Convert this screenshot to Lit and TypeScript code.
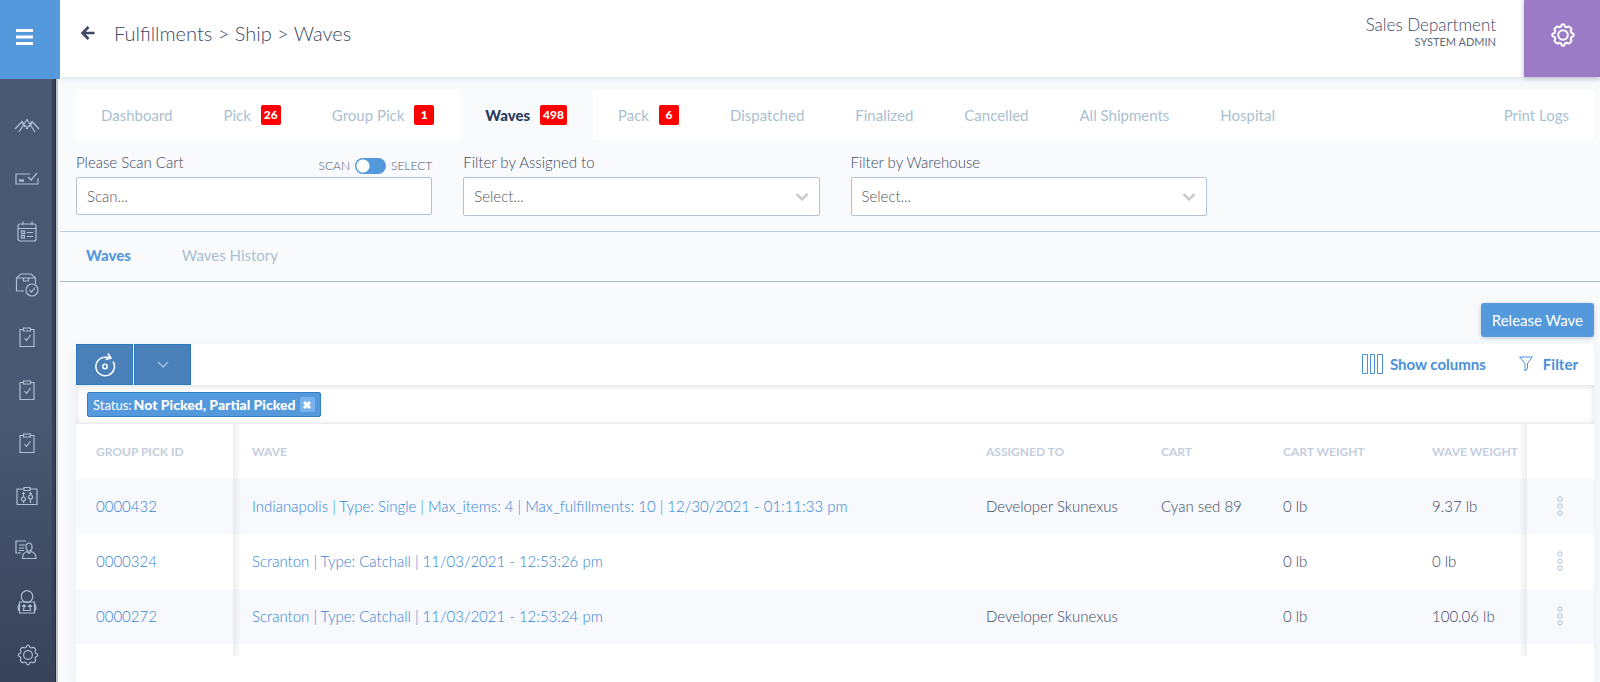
import { LitElement, html, css, svg } from "lit";
import { customElement } from "lit/decorators.js";

const icons = {
  peaks: svg`<path d="M1 17 8 9.500l6 7.500M5 20l8-12.500 8 12.500M12 17l6-7.500 7 7.500M8 11l3 4M18 11l-3 4"/>`,
  card: svg`<path d="M16 9H2v10h22v-6"/><path d="M5 15.500h5" stroke-width="2.400"/><path d="m14 12 3 3 6-7"/>`,
  calendar: svg`<rect x="4" y="6" width="18" height="17" rx="2"/><path d="M4 10.500h18M9 3.500V7M18 3.500V7"/><rect x="7.500" y="13" width="3" height="2.500"/><rect x="7.500" y="17.500" width="3" height="2.500"/><path d="M13 14.500h6M13 18.500h6"/>`,
  box: svg`<path d="M10 20H2.500V7L7 3h10l4.500 4v6M2.500 7h19M9.500 7.500v2.500h5V7.500"/><circle cx="18" cy="19" r="6"/><path d="m15.500 19 2 2 3.500-4.500"/>`,
  clip: svg`<path d="M9 5.500H6v17h14v-17h-3M9.500 4h7v3h-7zM10.500 14l2 2.500 4-5.500"/>`,
  sliders: svg`<path d="M10 6H3v15.500h20V6h-7M10 4.500h6v3h-6zM9.500 9v5M9.500 18v2M16.500 9v3M16.500 16v4"/><circle cx="9.500" cy="16" r="2"/><circle cx="16.500" cy="14" r="2"/><path d="M8 10.500h3M15 10.500h3"/>`,
  person: svg`<path d="M7 17H2V5h10M5 9h6M5 12h5M5 14.500h5"/><ellipse cx="15" cy="11" rx="3" ry="4"/><path d="M8.500 22.500c0-5 2.500-6.500 4.500-7l2 2 2-2c2 .5 5 2 5 7z"/>`,
  robot: svg`<circle cx="13" cy="7.500" r="5.800"/><path d="M5.500 13h15v11h-15zM5.500 15c-2 1-2 6 0 7M20.500 15c2 1 2 6 0 7M8 17.500l2-1.500 2 1.500M10 16.500v3M14 17.500l2-1.500 2 1.500M16 16.500v3M9.500 19.500v2h7v-2"/>`,
};

const gearShape = svg`<circle cx="12" cy="12" r="4.800"/><path d="M12 1.300c1.300 0 1.700.7 1.900 2.200l2 .8c1.200-.9 2-1.100 2.900-.2l1.100 1.100c.9.900.7 1.700-.2 2.900l.8 2c1.500.2 2.200.6 2.200 1.900s-.7 1.700-2.200 1.900l-.8 2c.9 1.200 1.100 2 .2 2.900l-1.100 1.100c-.9.900-1.700.7-2.900-.2l-2 .8c-.2 1.500-.6 2.200-1.900 2.200s-1.700-.7-1.900-2.200l-2-.8c-1.200.9-2 1.100-2.900.2l-1.100-1.100c-.9-.9-.7-1.700.2-2.900l-.8-2C2 13.700 1.300 13.300 1.300 12s.7-1.700 2.200-1.900l.8-2c-.9-1.200-1.100-2-.2-2.900l1.100-1.100c.9-.9 1.700-.7 2.900.2l2-.8c.2-1.500.6-2.200 1.900-2.200z"/>`;

const tabs: { label: string; count?: number; active?: boolean }[] = [
  { label: "Dashboard" },
  { label: "Pick", count: 26 },
  { label: "Group Pick", count: 1 },
  { label: "Waves", count: 498, active: true },
  { label: "Pack", count: 6 },
  { label: "Dispatched" },
  { label: "Finalized" },
  { label: "Cancelled" },
  { label: "All Shipments" },
  { label: "Hospital" },
];

const nav: [string, keyof typeof icons][] = [
  ["Overview", "peaks"],
  ["Orders", "card"],
  ["Planning", "calendar"],
  ["Fulfillments", "box"],
  ["Purchasing", "clip"],
  ["Receiving", "clip"],
  ["Counts", "clip"],
  ["Rules", "sliders"],
  ["Customers", "person"],
  ["Automation", "robot"],
];

const rows = [
  ["0000432", "Indianapolis | Type: Single | Max_items: 4 | Max_fulfillments: 10 | 12/30/2021 - 01:11:33 pm", "Developer Skunexus", "Cyan sed 89", "0 lb", "9.37 lb"],
  ["0000324", "Scranton | Type: Catchall | 11/03/2021 - 12:53:26 pm", "", "", "0 lb", "0 lb"],
  ["0000272", "Scranton | Type: Catchall | 11/03/2021 - 12:53:24 pm", "Developer Skunexus", "", "0 lb", "100.06 lb"],
];

@customElement("app-root")
export class AppRoot extends LitElement {
  static styles = css`
    :host {
      display: grid;
      grid-template-columns: 60px minmax(0, 1fr);
      height: 100vh;
      overflow: hidden;
      background: #f8fafc;
      color: #3c4864;
      font: 300 15px/20px Lato, "Open Sans", sans-serif;
    }
    * { box-sizing: border-box; }
    button, input, select { font: inherit; color: inherit; margin: 0; }
    button { border: 0; background: none; padding: 0; cursor: pointer; }
    a { text-decoration: none; color: inherit; }
    svg { display: block; fill: none; stroke: currentColor; }

    .side { display: flex; flex-direction: column; min-height: 0; position: relative; z-index: 1; }
    .menu { height: 79px; flex: none; background: #5499dc; display: flex; align-items: center; padding: 0 0 6px 16px; color: #fff; }
    .rail {
      flex: 1; min-height: 0; width: 58px; overflow: hidden;
      border-right: 2px solid #c3c4c9;
      background: linear-gradient(90deg, transparent 52px, #374259 52px 55px, #1f2e4d 55px), linear-gradient(#4a5873 0 55%, #38435a);
      display: flex; flex-direction: column; padding-top: 19px;
    }
    .rail a { height: 53px; flex: none; padding-left: 14px; display: flex; align-items: center; color: #aebfd2; }
    .rail .set { padding-left: 17px; }

    .main { display: flex; flex-direction: column; min-width: 0; min-height: 0; }
    .top { height: 77px; flex: none; background: #fff; display: flex; box-shadow: 0 2px 6px #dde4ea; position: relative; }
    .crumbs { flex: 1; display: flex; align-items: center; gap: 18px; padding: 0 0 11px 20px; }
    .crumbs h1 { margin: 0; font-size: 20px; line-height: 22px; font-weight: 300; }
    .user { text-align: right; padding: 15px 28px 0 0; font-size: 17px; }
    .role { font-size: 11px; line-height: 14px; font-weight: 400; color: #5d6880; }
    .gear { width: 76px; background: #9b7bc6; color: #fff; display: flex; align-items: center; justify-content: center; padding: 0 0 8px 2px; box-shadow: 0 1px 5px #bcb9c8; }

    .tabs { display: flex; flex: none; margin: 13px 6px 0 16px; height: 50px; background: #fff; color: #aabfd0; font-weight: 400; }
    .tab { display: flex; align-items: center; gap: 10px; padding: 0 26px 0 25px; white-space: nowrap; }
    .tab.last { margin-left: auto; padding-right: 25px; }
    .tab.active { background: #f8fafc; color: #2a3a5c; font-weight: 900; }
    .count { background: #f00; color: #fff; border-radius: 2px; min-width: 20px; height: 20px; padding: 0 3px; text-align: center; font-size: 12px; font-weight: 900; }

    .filters { flex: none; display: grid; grid-template-columns: repeat(4, minmax(0, 1fr)); gap: 31px; padding: 12px 6px 15px 16px; border-bottom: 1px solid #c0cedb; }
    .field { display: flex; flex-direction: column; gap: 5px; }
    .line { display: flex; justify-content: space-between; align-items: flex-start; height: 20px; }
    .switch { display: flex; align-items: center; gap: 5px; padding-top: 6px; font-size: 12px; line-height: 14px; color: #4f5b70; }
    .switch input { appearance: none; margin: 0; width: 31px; height: 16px; border-radius: 8px; background: radial-gradient(circle at 8px 8px, #fff 6px, transparent 7px) #5499dc; }
    .box { width: 100%; height: 38px; padding: 0 10px; border: 1px solid #b3c2d2; border-radius: 2px; background: #fff; color: #555; outline: 0; }
    .box::placeholder { color: #555; opacity: 1; }
    .pick { display: grid; align-items: center; }
    .pick > * { grid-area: 1 / 1; }
    .pick .box { appearance: none; height: 39px; padding-bottom: 2px; }
    .pick svg { justify-self: end; margin-right: 11px; color: #ccc; pointer-events: none; }

    .sub { flex: none; height: 50px; display: flex; align-items: center; gap: 51px; padding: 0 26px 3px; border-bottom: 1px solid #a9bacb; color: #aabfd0; font-weight: 400; }
    .sub .on { color: #5499dc; font-weight: 900; }

    .actions { flex: none; display: flex; justify-content: flex-end; padding: 21px 6px 7px; }
    .release { height: 34px; padding: 0 11px 1px; border-radius: 3px; background: #5499dc; color: #fff; box-shadow: 0 1px 4px #b9c8d8; font-weight: 400; }

    .panel { flex: 1; margin: 0 6px 0 16px; background: #fff; min-height: 0; overflow: hidden; box-shadow: 0 4px 12px #e9eef4; }
    .bar { display: flex; height: 41px; gap: 1px; color: #4990da; font-weight: 700; }
    .sq { width: 57px; background: #4a80b9; border: 1px solid #2a78bd; color: #fff; display: flex; align-items: center; justify-content: center; }
    .sq.dim { color: #a9c0da; }
    .tool { display: flex; align-items: center; gap: 7px; margin-right: 32px; padding-bottom: 1px; }
    .tool.first { margin-left: auto; }
    .tool.end { gap: 10px; margin-right: 16px; }
    .chips { height: 39px; padding: 7px 11px; box-shadow: inset 0 1px 6px #ddd; background: #fff; display: flex; border-bottom: 1px solid #ececee; }
    .chip { height: 25px; display: flex; align-items: center; gap: 2px; padding: 0 5px; border: 1px solid #327fc6; border-radius: 2px; background: #5499dc; color: #fff; font-size: 13px; font-weight: 400; }
    .chip strong { font-size: 14px; font-weight: 900; }
    .chip button { width: 15px; height: 15px; border-radius: 2px; background: #78b3ef; display: grid; place-items: center; margin-left: 2px; }

    table { width: 100%; border-collapse: collapse; table-layout: fixed; }
    .c1 { width: 157px; } .c3 { width: 175px; } .c4 { width: 122px; } .c5 { width: 149px; } .c6 { width: 115px; } .c7 { width: 67px; }
    th, td { text-align: left; padding: 0 0 2px 20px; height: 55px; white-space: nowrap; }
    th { color: #c3cede; font-size: 12px; font-weight: 700; padding-bottom: 0; }
    tbody tr:nth-child(odd) { background: #f7f9fc; }
    tbody tr.rest { background: #fff; }
    .rest td { height: 12px; }
    td a { color: #3583d3; }
    tr > :nth-child(2) { padding-left: 19px; background: linear-gradient(90deg, #0001, #0000 8px); }
    tr > :nth-child(6) { background: linear-gradient(270deg, #0001, #0000 8px); }
    .dots { width: 24px; height: 24px; color: #aabfd2; display: grid; place-items: center; margin-left: 1px; }
  `;

  private gear(size: number, width: number) {
    return html`<svg width=${size} height=${size} viewBox="0 0 24 24" stroke-width=${width} stroke-linejoin="round">${gearShape}</svg>`;
  }

  private selectField(id: string, label: string) {
    return html`<div class="field">
      <div class="line"><label for=${id}>${label}</label></div>
      <div class="pick">
        <select class="box" id=${id}><option>Select...</option></select>
        <svg width="14" height="10" viewBox="0 0 14 10" stroke-width="2.500"><path d="m1.500 2 5.500 5.500L12.500 2" /></svg>
      </div>
    </div>`;
  }

  render() {
    return html`
      <div class="side">
        <button class="menu" aria-label="Menu">
          <svg width="17" height="16" viewBox="0 0 17 16" stroke-width="3"><path d="M0 1.500h17M0 8h17M0 14.500h17" /></svg>
        </button>
        <nav class="rail">
          ${nav.map(([name, key]) => html`<a href="#" aria-label=${name}><svg width="26" height="26" viewBox="0 0 26 26" stroke-width="1.200">${icons[key]}</svg></a>`)}
          <a href="#" class="set" aria-label="Settings">${this.gear(22, 1.3)}</a>
        </nav>
      </div>
      <div class="main">
        <header class="top">
          <div class="crumbs">
            <button aria-label="Back"><svg width="16" height="16" viewBox="0 0 16 16" stroke-width="2.600"><path d="M14.500 8H3M8.500 2 2.500 8l6 6" /></svg></button>
            <h1>Fulfillments &gt; Ship &gt; Waves</h1>
          </div>
          <div class="user">Sales Department<div class="role">SYSTEM ADMIN</div></div>
          <button class="gear" aria-label="Settings">${this.gear(24, 2)}</button>
        </header>
        <nav class="tabs">
          ${tabs.map((t) => html`<a href="#" class="tab ${t.active ? "active" : ""}">${t.label}${t.count ? html`<span class="count">${t.count}</span>` : ""}</a>`)}
          <a href="#" class="tab last">Print Logs</a>
        </nav>
        <section class="filters">
          <div class="field">
            <div class="line">
              <label for="scan">Please Scan Cart</label>
              <label class="switch">SCAN <input type="checkbox" role="switch" /> SELECT</label>
            </div>
            <input class="box" id="scan" type="text" placeholder="Scan..." />
          </div>
          ${this.selectField("assigned", "Filter by Assigned to")}
          ${this.selectField("warehouse", "Filter by Warehouse")}
        </section>
        <nav class="sub"><a href="#" class="on">Waves</a><a href="#">Waves History</a></nav>
        <div class="actions"><button class="release">Release Wave</button></div>
        <section class="panel">
          <div class="bar">
            <button class="sq" aria-label="Refresh"><svg width="22" height="26" viewBox="0 0 22 26" stroke-width="1.500"><path d="M19 9.500A9.300 9.300 0 1 1 11 5.200h5.500M14 1.500l3 4.500-5.500 1.500" /><circle cx="11" cy="14.500" r="2.200" /></svg></button>
            <button class="sq dim" aria-label="More"><svg width="12" height="8" viewBox="0 0 12 8" stroke-width="1.500"><path d="m1 1 5 5 5-5" /></svg></button>
            <button class="tool first"><svg width="21" height="20" viewBox="0 0 21 20"><path d="M.5.500h5v19h-5zM8.500.500h4v19h-4zM15.500.500h5v19h-5z" /></svg>Show columns</button>
            <button class="tool end"><svg width="14" height="16" viewBox="0 0 14 16"><path d="M.7 1h12.600L8.500 7.500v5L6 15V7.500z" /></svg>Filter</button>
          </div>
          <div class="chips">
            <div class="chip">Status: <strong>Not Picked, Partial Picked</strong><button aria-label="Remove"><svg width="8" height="8" viewBox="0 0 8 8" stroke-width="3"><path d="m1 1 6 6M7 1 1 7" /></svg></button></div>
          </div>
          <table>
            <colgroup><col class="c1" /><col /><col class="c3" /><col class="c4" /><col class="c5" /><col class="c6" /><col class="c7" /></colgroup>
            <thead><tr><th>GROUP PICK ID</th><th>WAVE</th><th>ASSIGNED TO</th><th>CART</th><th>CART WEIGHT</th><th>WAVE WEIGHT</th><th></th></tr></thead>
            <tbody>
              ${rows.map((r) => html`<tr>${r.map((c, i) => html`<td>${i < 2 ? html`<a href="#">${c}</a>` : c}</td>`)}<td><button class="dots" aria-label="Row actions"><svg width="6" height="20" viewBox="0 0 6 20"><circle cx="3" cy="3" r="2.200" /><circle cx="3" cy="10" r="2.200" /><circle cx="3" cy="17" r="2.200" /></svg></button></td></tr>`)}
              <tr class="rest">${[1, 2, 3, 4, 5, 6, 7].map(() => html`<td></td>`)}</tr>
            </tbody>
          </table>
        </section>
      </div>
    `;
  }
}
